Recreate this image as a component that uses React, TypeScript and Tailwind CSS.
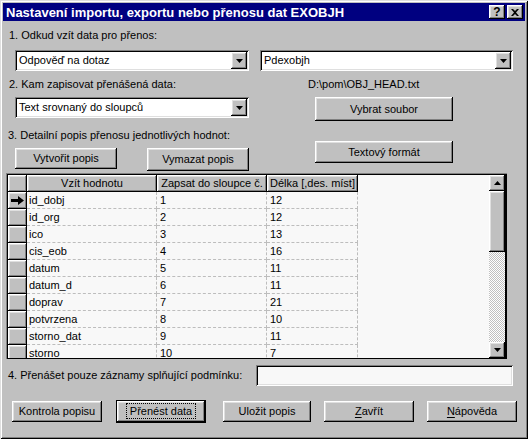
import type { ReactNode } from "react";

const raised =
  "bg-[#c0c0c0] shadow-[inset_-1px_-1px_#000,inset_1px_1px_#fff,inset_-2px_-2px_#808080,inset_2px_2px_#dfdfdf]";
const sunken =
  "shadow-[inset_1px_1px_#808080,inset_-1px_-1px_#fff,inset_2px_2px_#000,inset_-2px_-2px_#dfdfdf]";

const rows: [string, string, string][] = [
  ["id_dobj", "1", "12"],
  ["id_org", "2", "12"],
  ["ico", "3", "13"],
  ["cis_eob", "4", "16"],
  ["datum", "5", "11"],
  ["datum_d", "6", "11"],
  ["doprav", "7", "21"],
  ["potvrzena", "8", "10"],
  ["storno_dat", "9", "11"],
  ["storno", "10", "7"],
];

function DownArrow() {
  return (
    <svg width="7" height="4" viewBox="0 0 7 4">
      <path d="M0 0h7L3.5 4z" fill="#000" />
    </svg>
  );
}

function Combo({ value, className }: { value: string; className: string }) {
  return (
    <div className={`flex h-[21px] items-center bg-white p-[2px] ${sunken} ${className}`}>
      <span className="flex-1 truncate pl-[2px] leading-none">{value}</span>
      <div className={`flex h-[17px] w-4 items-center justify-center ${raised}`}>
        <DownArrow />
      </div>
    </div>
  );
}

function Btn({ children, className = "" }: { children: ReactNode; className?: string }) {
  return (
    <div className={`flex items-center justify-center ${raised} ${className}`}>
      <span className="leading-none">{children}</span>
    </div>
  );
}

function Cell({ children, w, first = false }: { children: ReactNode; w: string; first?: boolean }) {
  return (
    <div
      className={`flex h-[17px] shrink-0 items-center border-r border-b border-dashed border-[#bdbdbd] ${
        first ? "pl-[2px]" : "pl-[3px]"
      } ${w}`}
    >
      <span className="leading-none">{children}</span>
    </div>
  );
}

export default function App() {
  return (
    <div className="h-[439px] w-[528px] overflow-hidden whitespace-nowrap bg-[#c0c0c0] font-['Liberation_Sans',Arial,sans-serif] text-[11px] text-black">
      <div className="flex h-full flex-col p-[3px] shadow-[inset_1px_1px_#dfdfdf,inset_-1px_-1px_#000,inset_2px_2px_#fff,inset_-2px_-2px_#808080]">
        {/* title bar */}
        <div className="flex h-[18px] shrink-0 items-center bg-[#000080] pl-[3px] pr-[2px] text-white">
          <span className="flex-1 text-[13px] font-bold leading-none">Nastavení importu, exportu nebo přenosu dat EXOBJH</span>
          <div className={`flex h-[14px] w-4 items-center justify-center text-[12px] font-bold text-black ${raised}`}>
            <span className="leading-none">?</span>
          </div>
          <div className={`ml-[2px] flex h-[14px] w-4 items-center justify-center ${raised}`}>
            <svg width="8" height="7" viewBox="0 0 8 7">
              <path d="M0 0h2l2 2 2-2h2L5 3.5 8 7H6L4 5 2 7H0l3-3.5z" fill="#000" />
            </svg>
          </div>
        </div>

        {/* section 1 */}
        <div className="mt-[7px] flex h-[15px] items-center pl-[6px]">1. Odkud vzít data pro přenos:</div>
        <div className="mt-[7px] flex pl-[12px]">
          <Combo value="Odpověď na dotaz" className="w-[234px]" />
          <Combo value="Pdexobjh" className="ml-[11px] w-[253px]" />
        </div>

        {/* sections 2 and 3 */}
        <div className="flex">
          <div className="flex w-[257px] flex-col">
            <div className="mt-[6px] flex h-[15px] items-center pl-[6px]">2. Kam zapisovat přenášená data:</div>
            <Combo value="Text srovnaný do sloupců" className="ml-[12px] mt-[5px] w-[234px]" />
            <div className="mt-[10px] flex h-[15px] items-center pl-[5px]">3. Detailní popis přenosu jednotlivých hodnot:</div>
            <div className="mt-[5px] flex items-start pl-[12px]">
              <Btn className="h-[21px] w-[102px]">Vytvořit popis</Btn>
              <Btn className="ml-[30px] h-[23px] w-[102px]">Vymazat popis</Btn>
            </div>
          </div>
          <div className="flex flex-col">
            <div className="mt-[6px] flex h-[15px] items-center pl-[48px]">D:\pom\OBJ_HEAD.txt</div>
            <Btn className="ml-[55px] mt-[5px] h-[24px] w-[138px]">Vybrat soubor</Btn>
            <Btn className="ml-[55px] mt-[20px] h-[22px] w-[138px]">Textový formát</Btn>
          </div>
        </div>

        {/* grid */}
        <div className="ml-[3px] mt-[2px] h-[186px] w-[501px] border-t border-l border-[#808080]">
          <div className="flex h-full border-t border-r-2 border-b border-l border-black">
            <div className="flex-1 overflow-hidden bg-[#f8f8f8]">
              <div className="flex h-[17px]">
                <div className={`h-[17px] w-[19px] shrink-0 ${raised}`} />
                <div className={`flex h-[17px] w-[130px] items-center justify-center ${raised}`}>
                  <span className="leading-none">Vzít hodnotu</span>
                </div>
                <div className={`flex h-[17px] w-[110px] items-center justify-center ${raised}`}>
                  <span className="leading-none">Zapsat do sloupce č.</span>
                </div>
                <div className={`flex h-[17px] w-[91px] items-center justify-center ${raised}`}>
                  <span className="leading-none">Délka [,des. míst]</span>
                </div>
              </div>
              {rows.map(([a, b, c], i) => (
                <div key={a} className="flex h-[17px]">
                  <div className={`flex h-[17px] w-[19px] shrink-0 items-center justify-center ${raised}`}>
                    {i === 0 && (
                      <svg width="13" height="9" viewBox="0 0 13 9">
                        <path d="M0 3h7V0l6 4.5L7 9V6H0z" fill="#000" />
                      </svg>
                    )}
                  </div>
                  <Cell w="w-[130px]" first>
                    {a}
                  </Cell>
                  <Cell w="w-[110px]">{b}</Cell>
                  <Cell w="w-[91px]">{c}</Cell>
                </div>
              ))}
            </div>
            {/* scrollbar */}
            <div className="flex w-4 shrink-0 flex-col">
              <div className={`flex h-4 items-center justify-center ${raised}`}>
                <svg width="7" height="4" viewBox="0 0 7 4">
                  <path d="M3.5 0L7 4H0z" fill="#000" />
                </svg>
              </div>
              <div className={`h-[61px] ${raised}`} />
              <div className="flex-1 bg-[image:repeating-conic-gradient(#c0c0c0_0%_25%,#fff_0%_50%)] bg-[length:2px_2px]" />
              <div className={`flex h-4 items-center justify-center ${raised}`}>
                <DownArrow />
              </div>
            </div>
          </div>
        </div>

        {/* section 4 */}
        <div className="mt-[6px] flex items-center">
          <span className="w-[253px] pl-[5px] leading-none">4. Přenášet pouze záznamy splňující podmínku:</span>
          <div className={`h-[21px] w-[257px] bg-[#f8f8f8] ${sunken}`} />
        </div>

        {/* bottom buttons */}
        <div className="mt-[14px] flex items-start pl-[9px]">
          <Btn className="mt-[1px] h-[21px] w-[90px]">Kontrola popisu</Btn>
          <div className="ml-[14px] h-[23px] w-[90px] border border-black">
            <Btn className="h-full w-full">
              <span className="border border-dotted border-black px-[3px] py-[1px]">Přenést data</span>
            </Btn>
          </div>
          <Btn className="ml-[17px] mt-[1px] h-[21px] w-[88px]">Uložit popis</Btn>
          <Btn className="ml-[13px] mt-[1px] h-[21px] w-[90px]">
            <span className="underline underline-offset-2">Z</span>avřít
          </Btn>
          <Btn className="ml-[13px] mt-[1px] h-[21px] w-[90px]">
            <span className="underline underline-offset-2">N</span>ápověda
          </Btn>
        </div>
      </div>
    </div>
  );
}
